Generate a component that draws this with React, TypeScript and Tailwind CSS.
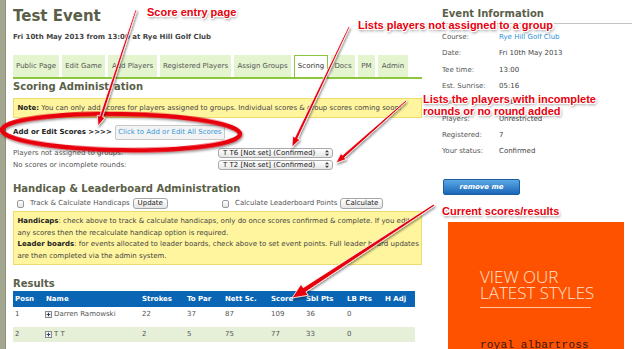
import React from 'react';

const tabs = [
  { label: 'Public Page', w: 'w-[46px]' },
  { label: 'Edit Game', w: 'w-[43px]' },
  { label: 'Add Players', w: 'w-[49px]' },
  { label: 'Registered Players', w: 'w-[71px]' },
  { label: 'Assign Groups', w: 'w-[57px]' },
  { label: 'Scoring', w: 'w-[34px]', active: true },
  { label: 'Docs', w: 'w-[24px]' },
  { label: 'PM', w: 'w-[17px]' },
  { label: 'Admin', w: 'w-[30px]' },
];

const info: [string, string, boolean?][] = [
  ['Course:', 'Rye Hill Golf Club', true],
  ['Date:', 'Fri 10th May 2013'],
  ['Tee time:', '13:00'],
  ['Est. Sunrise:', '05:16'],
  ['Format:', 'Stableford'],
  ['Players:', 'Unrestricted'],
  ['Registered:', '7'],
  ['Your status:', 'Confirmed'],
];

const results = [
  ['1', 'Darren Ramowski', '22', '37', '87', '109', '36', '0', ''],
  ['2', 'T T', '2', '5', '75', '77', '33', '0', ''],
];

const cols = 'grid grid-cols-[31px_96px_45px_38px_46px_35px_41px_38px_30px] pl-[2px] items-center';

function Select({ value }: { value: string }) {
  return (
    <div className="w-[115px] h-[10px] rounded-[3px] border border-[#a9a9a9] bg-linear-to-b from-white to-[#e6e6e6] flex items-center pl-[4px] pr-[3px] text-[#222] leading-none">
      <span className="flex-1">{value}</span>
      <svg width="4" height="6" viewBox="0 0 4 6">
        <path d="M2 0L4 2.3H0Z M2 6L4 3.7H0Z" fill="#444" />
      </svg>
    </div>
  );
}

function Check() {
  return <span className="ml-[4px] w-[7px] h-[8px] rounded-[2px] border border-[#9a9a9a] bg-linear-to-b from-white to-[#e4e4e4]" />;
}

function Btn({ children, w }: { children: React.ReactNode; w: string }) {
  return (
    <span className={`${w} ml-[3px] h-[11px] flex items-center justify-center rounded-[3px] border border-[#a5a5a5] bg-linear-to-b from-white to-[#e6e6e6] text-[#222] leading-none`}>
      {children}
    </span>
  );
}

function PlusBox() {
  return (
    <svg width="7" height="7" viewBox="0 0 7 7" className="ml-[-1px] mr-[2px]">
      <rect x="0.5" y="0.5" width="6" height="6" fill="#f2f2f2" stroke="#8a8a8a" />
      <path d="M3.5 1.7v3.6M1.7 3.5h3.6" stroke="#2c3e6a" strokeWidth="1" />
    </svg>
  );
}

function Note({ className, children }: { className: string; children: React.ReactNode }) {
  return (
    <div
      className={`absolute font-['Liberation_Sans',Arial,sans-serif] font-bold text-[11px] leading-[12px] text-[#e8000e] whitespace-nowrap [text-shadow:1px_0_0_#fff,-1px_0_0_#fff,0_1px_0_#fff,0_-1px_0_#fff,1px_1px_0_#fff,-1px_-1px_0_#fff,1px_-1px_0_#fff,-1px_1px_0_#fff,1px_2px_3px_rgba(0,0,0,0.55)] ${className}`}
    >
      {children}
    </div>
  );
}

// tapered arrow shaft + head, all in page pixels
function arrow(x1: number, y1: number, x2: number, y2: number, tailW: number, shaftW: number, headL: number, headW: number) {
  const len = Math.hypot(x2 - x1, y2 - y1);
  const ux = (x2 - x1) / len;
  const uy = (y2 - y1) / len;
  const nx = -uy;
  const ny = ux;
  const bx = x2 - ux * headL;
  const by = y2 - uy * headL;
  const p = (x: number, y: number, s: number) => `${x + nx * s},${y + ny * s}`;
  return [
    p(x1, y1, tailW / 2),
    p(bx, by, shaftW / 2),
    p(bx, by, headW / 2),
    `${x2},${y2}`,
    p(bx, by, -headW / 2),
    p(bx, by, -shaftW / 2),
    p(x1, y1, -tailW / 2),
  ].join(' ');
}

export default function App() {
  return (
    <div className="relative flex w-[640px] h-[349px] overflow-hidden bg-white font-['DejaVu_Sans',Verdana,sans-serif] text-[7px] text-[#555]">
      <div className="w-[6px] shrink-0 bg-[#a3a78f] border-r border-[#8d9179]" />

      <main className="ml-[7px] w-[409px] shrink-0 pt-[9px]">
        <h1 className="text-[15px] leading-[15px] font-bold text-[#5a6048]">Test Event</h1>
        <p className="mt-[8px] leading-[10px] font-bold text-[#444]">Fri 10th May 2013 from 13:00 at Rye Hill Golf Club</p>

        <nav className="mt-[13px] flex gap-[3px] h-[22px]">
          {tabs.map((t) => (
            <div
              key={t.label}
              className={`${t.w} shrink-0 flex items-center justify-center whitespace-nowrap ${
                t.active ? 'bg-white border border-b-0 border-[#8cc63e] text-[#333]' : 'bg-[#e4f4cf] text-[#555]'
              }`}
            >
              {t.label}
            </div>
          ))}
        </nav>
        <div className="h-[2px] bg-[#8cc63e]" />

        <h2 className="mt-[2px] text-[10px] leading-[12px] font-bold text-[#5a6048]">Scoring Administration</h2>
        <div className="mt-[5px] h-[20px] border border-[#f0dc6c] bg-[#fff59e] flex items-center pl-[3.5px] text-[#444] whitespace-nowrap">
          <b className="text-[#222]">Note:</b>&nbsp;You can only add scores for players assigned to groups. Individual scores &amp; group scores coming soon!
        </div>

        <div className="mt-[7px] h-[15px] flex items-center">
          <b className="text-[#222]">Add or Edit Scores &gt;&gt;&gt;&gt;</b>
          <span className="ml-[3px] w-[110px] h-[15px] flex items-center justify-center rounded-[2px] border border-[#c9c9c9] bg-[#f3f3f3] text-[#3a9ad9]">
            Click to Add or Edit All Scores
          </span>
        </div>

        <div className="mt-[8px] h-[10px] flex items-center">
          <span className="w-[205px]">Players not assigned to groups:</span>
          <Select value="T T6 [Not set] (Confirmed)" />
        </div>
        <div className="mt-[2px] h-[10px] flex items-center">
          <span className="w-[205px]">No scores or incomplete rounds:</span>
          <Select value="T T2 [Not set] (Confirmed)" />
        </div>

        <h2 className="mt-[12.5px] text-[10px] leading-[12px] font-bold text-[#5a6048]">Handicap &amp; Leaderboard Administration</h2>
        <div className="mt-[3.5px] h-[11px] grid grid-cols-[205px_1fr]">
          <div className="flex items-center">
            <Check />
            <span className="ml-[6px]">Track &amp; Calculate Handicaps</span>
            <Btn w="w-[35px]">Update</Btn>
          </div>
          <div className="flex items-center">
            <Check />
            <span className="ml-[6px]">Calculate Leaderboard Points</span>
            <Btn w="w-[43px]">Calculate</Btn>
          </div>
        </div>
        <div className="mt-[2px] h-[54px] border border-[#f0dc6c] bg-[#fff59e] pt-[4px] pl-[3.5px] leading-[11.7px] text-[#444] whitespace-nowrap">
          <b className="text-[#222]">Handicaps</b>: check above to track &amp; calculate handicaps, only do once scores confirmed &amp; complete. If you edit
          <br />
          any scores then the recalculate handicap option is required.
          <br />
          <b className="text-[#222]">Leader boards</b>: for events allocated to leader boards, check above to set event points. Full leader board updates
          <br />
          are then completed via the admin system.
        </div>

        <h2 className="mt-[12.5px] text-[10px] leading-[12px] font-bold text-[#5a6048]">Results</h2>
        <div className="mt-[1.5px] w-[402px]">
          <div className={`${cols} h-[16px] bg-[#0a66b5] text-white font-bold`}>
            {['Posn', 'Name', 'Strokes', 'To Par', 'Nett Sc.', 'Score', 'Sbl Pts', 'LB Pts', 'H Adj'].map((h) => (
              <span key={h}>{h}</span>
            ))}
          </div>
          {results.map((r, i) => (
            <div key={r[0]} className={`${cols} h-[15px] ${i === 1 ? 'mt-[5px] bg-[#e6f0d8]' : 'bg-white'}`}>
              {r.map((c, j) =>
                j === 1 ? (
                  <span key={j} className="flex items-center">
                    <PlusBox />
                    {c}
                  </span>
                ) : (
                  <span key={j}>{c}</span>
                )
              )}
            </div>
          ))}
        </div>
      </main>

      <aside className="ml-[18px] w-[192px] shrink-0 pt-[7.5px]">
        <h2 className="pl-[2px] text-[10px] leading-[12px] font-bold text-[#5a6048]">Event Information</h2>
        <div className="mt-[3.5px] ml-[1px] h-[1px] bg-[#c4c4c4]" />
        <div className="mt-[4.8px]">
          {info.map(([k, v, link]) => (
            <div key={k} className="h-[16.4px] flex items-center pl-[2px]">
              <span className="w-[57px]">{k}</span>
              <span className={link ? 'text-[#2a8fd6]' : 'text-[#444]'}>{v}</span>
            </div>
          ))}
        </div>
        <div className="mt-[19px] ml-[3px] w-[77px] h-[16px] rounded-[2px] bg-linear-to-b from-[#5aa7e6] to-[#1767b8] border border-[#1a5e9e] flex items-center justify-center text-white font-bold italic">
          remove me
        </div>
        <div className="mt-[27px] ml-[8px] w-[176px] h-[127px] bg-[#fe5200] pl-[32px] pt-[47.5px]">
          <div className="font-['Open_Sans',sans-serif] font-light text-[17px] leading-[16px] text-[#ffe2d0]">
            VIEW OUR
            <br />
            LATEST STYLES
          </div>
          <div className="mt-[6px] w-[111px] h-[1px] bg-[#ffc4a0]" />
          <div className="mt-[32px] font-['Liberation_Mono',monospace] text-[11px] leading-[11px] tracking-[0.2px] text-[#3a1406] whitespace-nowrap">
            royal albartross
          </div>
        </div>
      </aside>

      <svg className="absolute inset-0 pointer-events-none" width="640" height="349" viewBox="0 0 640 349">
        <defs>
          <filter id="sh" x="-20%" y="-20%" width="140%" height="140%">
            <feDropShadow dx="1" dy="1.5" stdDeviation="1" floodColor="#000" floodOpacity="0.45" />
          </filter>
        </defs>
        <ellipse cx="121" cy="132" rx="119" ry="18" transform="rotate(1 121 132)" fill="none" stroke="#e8000e" strokeWidth="4.5" filter="url(#sh)" />
        <g fill="#e8000e" stroke="#fff" strokeWidth="0.8" filter="url(#sh)">
          <polygon points={arrow(136, 10, 98, 126, 1.5, 3, 10, 8)} />
          <polygon points={arrow(349, 27, 292, 147, 1.5, 3, 10, 8)} />
          <polygon points={arrow(406, 101, 336, 163, 1.5, 3, 10, 8)} />
          <polygon points={arrow(434, 205, 292, 298, 2, 5, 15, 13)} />
        </g>
      </svg>

      <Note className="left-[147px] top-[5.5px]">Score entry page</Note>
      <Note className="left-[358px] top-[19px]">Lists players not assigned to a group</Note>
      <Note className="left-[423px] top-[93px]">
        Lists the players with incomplete
        <br />
        rounds or no round added
      </Note>
      <Note className="left-[442px] top-[204.5px]">Current scores/results</Note>
    </div>
  );
}
